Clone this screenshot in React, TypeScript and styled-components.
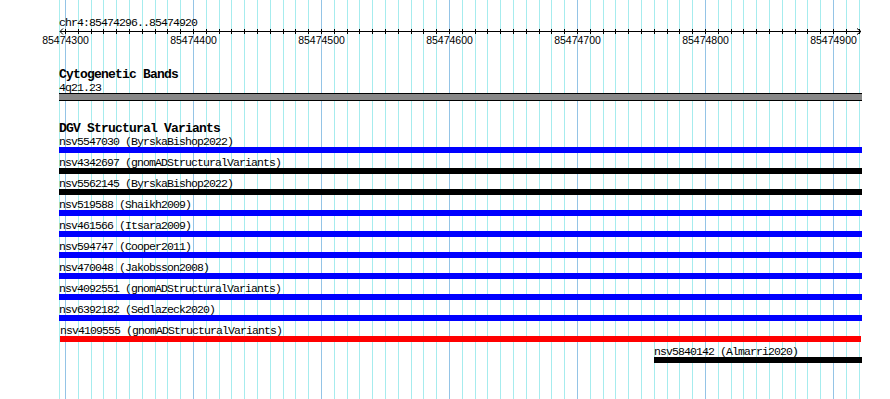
import React from "react";
import styled, { createGlobalStyle } from "styled-components";

const PX_PER_BP = 1.28;
const FIRST_TICK_BP = 85474300;
const TRACK_LEFT = 59;
const TRACK_WIDTH = 803;
const TICK_COUNT = 63;

// ticks every 10bp, first one (85474300) sits 6px into the track
const tickX = (k: number) => Math.round(6 + 10 * PX_PER_BP * k) + 0.5;

interface iVariant {
  id: string;
  study: string;
  color: string;
  from: number;
  to: number;
}

const variants: Array<iVariant> = [
  { id: "nsv5547030", study: "ByrskaBishop2022", color: "#0000ff", from: 0, to: 803 },
  { id: "nsv4342697", study: "gnomADStructuralVariants", color: "#000000", from: 0, to: 803 },
  { id: "nsv5562145", study: "ByrskaBishop2022", color: "#000000", from: 0, to: 803 },
  { id: "nsv519588", study: "Shaikh2009", color: "#0000ff", from: 0, to: 803 },
  { id: "nsv461566", study: "Itsara2009", color: "#0000ff", from: 0, to: 803 },
  { id: "nsv594747", study: "Cooper2011", color: "#0000ff", from: 0, to: 803 },
  { id: "nsv470048", study: "Jakobsson2008", color: "#0000ff", from: 0, to: 803 },
  { id: "nsv4092551", study: "gnomADStructuralVariants", color: "#0000ff", from: 0, to: 803 },
  { id: "nsv6392182", study: "Sedlazeck2020", color: "#0000ff", from: 0, to: 803 },
  { id: "nsv4109555", study: "gnomADStructuralVariants", color: "#ff0000", from: 1, to: 802 },
  { id: "nsv5840142", study: "Almarri2020", color: "#000000", from: 595, to: 803 },
];

const GlobalStyle = createGlobalStyle`
  html, body {
    margin: 0;
    padding: 0;
    background: #ffffff;
  }
`;

const Grid = () => {
  const lines = [];
  lines.push(<line key="edge" x1={TRACK_LEFT + 0.5} x2={TRACK_LEFT + 0.5} y1={0} y2={399} stroke="#aaeeee" />);
  for (let k = 0; k < TICK_COUNT; k++) {
    const x = TRACK_LEFT + tickX(k);
    lines.push(
      <line key={k} x1={x} x2={x} y1={0} y2={399} stroke={k % 10 === 0 ? "#94c4e6" : "#a6ecee"} />
    );
  }
  return <GridSvg width={890} height={399}>{lines}</GridSvg>;
};

const Ruler = () => {
  const ticks = [];
  const labels = [];
  for (let k = 0; k < TICK_COUNT; k++) {
    const x = tickX(k);
    ticks.push(<line key={k} x1={x} x2={x} y1={1} y2={6} stroke="#000" />);
    if (k % 10 === 0) {
      labels.push(
        <text key={"l" + k} x={x} y={16} textAnchor="middle">
          {FIRST_TICK_BP + k * 10}
        </text>
      );
    }
  }
  return (
    <RulerSvg width={TRACK_WIDTH} height={20}>
      <line x1={1} x2={802} y1={3.5} y2={3.5} stroke="#000" />
      <polyline points="4,0.5 1,3.5 4,6.5" fill="none" stroke="#000" />
      <polyline points="798,0.5 802,3.5 798,6.5" fill="none" stroke="#000" />
      {ticks}
      {labels}
    </RulerSvg>
  );
};

const App = () => {
  return (
    <Page>
      <GlobalStyle />
      <Grid />
      <Track>
        <ChrLabel>chr4:85474296..85474920</ChrLabel>
        <Ruler />
        <Title $top={20}>Cytogenetic Bands</Title>
        <Label $top={2}>4q21.23</Label>
        <Band />
        <Title $top={21}>DGV Structural Variants</Title>
        <Rows>
          {variants.map((v) => (
            <Feature key={v.id} style={{ marginLeft: v.from, width: v.to - v.from }}>
              <Label>
                {v.id} ({v.study})
              </Label>
              <Bar $color={v.color} />
            </Feature>
          ))}
        </Rows>
      </Track>
    </Page>
  );
};

export default App;

const Page = styled.div`
  position: relative;
  width: 890px;
  height: 399px;
  overflow: hidden;
  background: #ffffff;
`;

const GridSvg = styled.svg`
  position: absolute;
  top: 0;
  left: 0;
  z-index: 0;
`;

const Track = styled.div`
  position: relative;
  z-index: 1;
  margin-left: ${TRACK_LEFT}px;
  width: ${TRACK_WIDTH}px;
  display: flex;
  flex-direction: column;
`;

const ChrLabel = styled.div`
  margin-top: 18px;
  height: 10px;
  line-height: 10px;
  font-family: "Liberation Mono", monospace;
  font-size: 11.5px;
  letter-spacing: -0.9px;
  color: #000;
  white-space: nowrap;
`;

const RulerSvg = styled.svg`
  display: block;
  overflow: visible;
  text {
    font-family: "Liberation Sans", Arial, sans-serif;
    font-size: 10.5px;
    fill: #000;
  }
`;

const Title = styled.div<{ $top: number }>`
  margin-top: ${(p) => p.$top}px;
  height: 13px;
  line-height: 13px;
  font-family: "Liberation Mono", monospace;
  font-weight: bold;
  font-size: 13px;
  letter-spacing: -0.8px;
  color: #000;
  white-space: nowrap;
`;

const Label = styled.div<{ $top?: number }>`
  margin-top: ${(p) => p.$top || 0}px;
  height: 10px;
  line-height: 10px;
  font-family: "Liberation Mono", monospace;
  font-size: 11.5px;
  letter-spacing: -0.9px;
  color: #000;
  white-space: nowrap;
`;

const Band = styled.div`
  height: 6px;
  background: #888888;
  border-top: 1px solid #000;
  border-bottom: 1px solid #000;
`;

const Rows = styled.div`
  margin-top: 2px;
  display: flex;
  flex-direction: column;
  gap: 5px;
`;

const Feature = styled.div`
  display: flex;
  flex-direction: column;
`;

const Bar = styled.div<{ $color: string }>`
  height: 6px;
  background: ${(p) => p.$color};
`;
